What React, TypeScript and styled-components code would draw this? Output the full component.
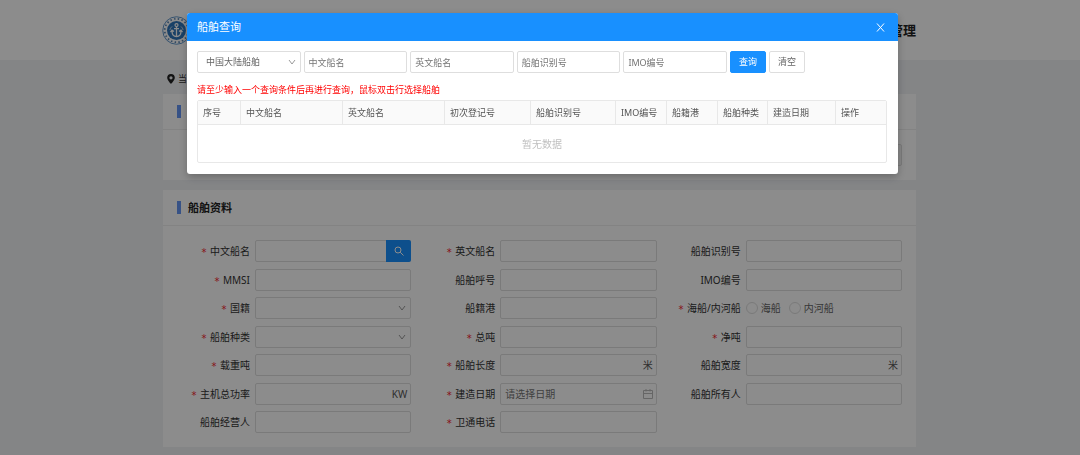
import React, { useId } from "react";
import styled, { createGlobalStyle, css } from "styled-components";

const blue = "#1890ff";
const line = "#dedede";

const GlobalStyle = createGlobalStyle`
  *, *::before, *::after { box-sizing: border-box; }
  body {
    margin: 0;
    background: #f0f2f5;
    color: #333;
    font: 10px/14px "Noto Sans", "Noto Sans CJK SC", sans-serif;
  }
  input, select, button { font: inherit; color: inherit; margin: 0; }
`;

const Page = styled.div`
  min-height: 100vh;
`;

const TopBar = styled.header`
  display: flex;
  align-items: center;
  justify-content: space-between;
  height: 60px;
  padding: 0 164px 0 162px;
  background: #fff;
`;

const SystemTitle = styled.h1`
  margin: 0;
  color: #222;
  font-size: 13px;
  line-height: 20px;
`;

const Content = styled.main`
  display: flex;
  flex-direction: column;
  gap: 10px;
  padding: 0 164px 8px 163px;
`;

const Crumbs = styled.nav`
  display: flex;
  align-items: center;
  gap: 3px;
  height: 24px;
  padding: 14px 0 0 4px;
  font-size: 9px;
`;

const Card = styled.section`
  background: #fff;
`;

const CardHeader = styled.div`
  display: flex;
  align-items: center;
  height: 36px;
  padding: 0 14px;
  border-bottom: 1px solid #eee;
`;

const CardTitle = styled.h2`
  display: flex;
  align-items: center;
  gap: 7px;
  margin: 0;
  color: #222;
  font-size: 11px;
  line-height: 16px;
  &::before {
    content: "";
    width: 4px;
    height: 13px;
    background: #6495f5;
  }
`;

const CardBody = styled.div`
  padding: 14px;
`;

const FormGrid = styled.form`
  display: grid;
  grid-template-columns: repeat(3, minmax(0, 1fr));
  column-gap: 11px;
  align-content: space-between;
  min-height: 193px;
`;

const Row = styled.div`
  display: flex;
  align-items: center;
  height: 22px;
`;

const Label = styled.label<{ $required?: boolean }>`
  flex: none;
  width: 78px;
  padding-right: 5px;
  text-align: right;
  white-space: nowrap;
  ${(p) =>
    p.$required &&
    css`
      &::before {
        content: "*";
        margin-right: 3px;
        color: #f5222d;
        font-family: "DejaVu Sans Mono", monospace;
        vertical-align: -1px;
        line-height: 10px;
      }
    `}
`;

const Control = styled.div`
  display: flex;
  flex: 1;
  align-items: center;
  min-width: 0;
  height: 22px;
  border: 1px solid ${line};
  border-radius: 2px;
  background: #fff;
`;

const TextInput = styled.input<{ $small?: boolean }>`
  flex: 1;
  width: 100%;
  min-width: 0;
  height: 20px;
  padding: 0 4px;
  border: 0;
  outline: 0;
  background: transparent;
  font-size: ${(p) => (p.$small ? 9 : 10)}px;
  &::placeholder { color: #757575; opacity: 1; }
`;

const SelectInput = styled.select<{ $small?: boolean }>`
  flex: 1;
  width: 100%;
  min-width: 0;
  height: 20px;
  padding: 0 8px;
  border: 0;
  outline: 0;
  appearance: none;
  background: transparent;
  color: #666;
  font-size: ${(p) => (p.$small ? 9 : 10)}px;
`;

const Suffix = styled.span`
  display: flex;
  padding-right: 3px;
  color: #555;
`;

const SearchButton = styled.button`
  display: flex;
  flex: none;
  align-items: center;
  justify-content: center;
  width: 25px;
  height: 22px;
  margin: -1px;
  padding: 0;
  border: 0;
  border-radius: 0 2px 2px 0;
  background: ${blue};
  color: #fff;
`;

const RadioGroup = styled.div`
  display: flex;
  gap: 8px;
`;

const RadioLabel = styled.label`
  display: flex;
  align-items: center;
  gap: 3px;
  color: #666;
`;

const Radio = styled.input`
  width: 12px;
  height: 12px;
  border: 1px solid ${line};
  border-radius: 50%;
  appearance: none;
  background: #fff;
  &:checked { border: 4px solid ${blue}; }
`;

const Mask = styled.div`
  position: fixed;
  inset: 0;
  padding: 13px 182px 0 187px;
  background: rgba(0, 0, 0, 0.45);
`;

const Dialog = styled.div`
  overflow: hidden;
  border-radius: 3px;
  background: #fff;
  box-shadow: 0 3px 9px rgba(0, 0, 0, 0.25);
`;

const DialogHeader = styled.div`
  display: flex;
  align-items: center;
  justify-content: space-between;
  height: 28px;
  padding: 0 13px 0 10px;
  background: ${blue};
  color: #fff;
`;

const DialogTitle = styled.h2`
  margin: 0;
  font-size: 11px;
  font-weight: 400;
  line-height: 16px;
`;

const CloseButton = styled.button`
  display: flex;
  padding: 0;
  border: 0;
  background: none;
`;

const DialogBody = styled.div`
  padding: 10px 11px 11px 10px;
`;

const SearchBar = styled.form`
  display: flex;
  gap: 3px;
`;

const SearchFields = styled.div`
  display: flex;
  flex: 0 1 530px;
  gap: 3px;
  min-width: 0;
`;

const Button = styled.button<{ $primary?: boolean }>`
  flex: none;
  width: 36px;
  height: 22px;
  padding: 0;
  border: 1px solid ${(p) => (p.$primary ? blue : line)};
  border-radius: 2px;
  background: ${(p) => (p.$primary ? blue : "#fff")};
  color: ${(p) => (p.$primary ? "#fff" : "#666")};
  font-size: 9px;
`;

const Hint = styled.p`
  margin: 10px 0 3px;
  color: #f00;
  font-size: 9px;
`;

const ResultTable = styled.table`
  width: 100%;
  border: 1px solid #e8e8e8;
  border-radius: 2px;
  border-spacing: 0;
  table-layout: fixed;
`;

const HeadCell = styled.th`
  height: 24px;
  padding: 0 5px;
  border-right: 1px solid #e8e8e8;
  border-bottom: 1px solid #e8e8e8;
  background: #fafafa;
  color: #555;
  font-size: 9px;
  font-weight: 400;
  text-align: left;
  white-space: nowrap;
  &:last-child { border-right: 0; }
`;

const EmptyCell = styled.td`
  height: 37px;
  padding: 0;
  color: #c0c0c0;
  text-align: center;
`;

const Chevron = () => (
  <Suffix>
    <svg width="10" height="10" viewBox="0 0 10 10" fill="none" stroke="#999" aria-hidden="true">
      <path d="M2 3l3 4 3-4" />
    </svg>
  </Suffix>
);

const CalendarIcon = () => (
  <Suffix>
    <svg width="10" height="10" viewBox="0 0 10 10" fill="none" stroke="#bbb" aria-hidden="true">
      <path d="M.5 1.5h9v8h-9zM.5 4.5h9M3 0v2.500M7 0v2.500" />
    </svg>
  </Suffix>
);

const Logo = () => (
  <svg width="29" height="29" viewBox="0 0 58 58" fill="none" stroke="#2f76bb" role="img" aria-label="徽标">
    <circle cx="29" cy="29" r="27.500" strokeWidth="1.500" />
    <circle cx="29" cy="29" r="23.500" strokeWidth="3.500" strokeDasharray="3 4.500" stroke="#5d87b3" />
    <circle cx="29" cy="29" r="19" fill="#2f76bb" stroke="none" />
    <g stroke="#fff" strokeWidth="2.500">
      <circle cx="29" cy="18" r="3" />
      <path d="M29 21v20M24 25h10M20 30c0 7 4 11 9 11s9-4 9-11M17 32l3-4 4 3M41 32l-3-4-4 3" />
      <path d="M20 21c-3 3-4 5-4 7M38 21c3 3 4 5 4 7" strokeWidth="1.500" />
    </g>
  </svg>
);

type FieldSpec = {
  label: string;
  required?: boolean;
  kind?: "search" | "select" | "radio" | "date";
  unit?: string;
  options?: string[];
};

const fields: FieldSpec[] = [
  { label: "中文船名", required: true, kind: "search" },
  { label: "英文船名", required: true },
  { label: "船舶识别号" },
  { label: "MMSI", required: true },
  { label: "船舶呼号" },
  { label: "IMO编号" },
  { label: "国籍", required: true, kind: "select" },
  { label: "船籍港" },
  { label: "海船/内河船", required: true, kind: "radio", options: ["海船", "内河船"] },
  { label: "船舶种类", required: true, kind: "select" },
  { label: "总吨", required: true },
  { label: "净吨", required: true },
  { label: "载重吨", required: true },
  { label: "船舶长度", required: true, unit: "米" },
  { label: "船舶宽度", unit: "米" },
  { label: "主机总功率", required: true, unit: "KW" },
  { label: "建造日期", required: true, kind: "date" },
  { label: "船舶所有人" },
  { label: "船舶经营人" },
  { label: "卫通电话", required: true },
];

function Field({ label, required, kind, unit, options = [] }: FieldSpec) {
  const id = useId();

  if (kind === "radio") {
    return (
      <Row role="radiogroup" aria-labelledby={id}>
        <Label as="span" id={id} $required={required}>{label}</Label>
        <RadioGroup>
          {options.map((option) => (
            <RadioLabel key={option}>
              <Radio type="radio" name={id} value={option} />
              {option}
            </RadioLabel>
          ))}
        </RadioGroup>
      </Row>
    );
  }

  return (
    <Row>
      <Label htmlFor={id} $required={required}>{label}</Label>
      <Control>
        {kind === "select" ? (
          <SelectInput id={id}><option value="" /></SelectInput>
        ) : (
          <TextInput id={id} placeholder={kind === "date" ? "请选择日期" : undefined} />
        )}
        {kind === "select" && <Chevron />}
        {kind === "date" && <CalendarIcon />}
        {unit && <Suffix>{unit}</Suffix>}
        {kind === "search" && (
          <SearchButton type="button" aria-label="查询船舶">
            <svg width="10" height="10" viewBox="0 0 10 10" fill="none" stroke="currentColor" aria-hidden="true">
              <circle cx="4" cy="4" r="3" />
              <path d="M6.200 6.200l3.300 3.300" />
            </svg>
          </SearchButton>
        )}
      </Control>
    </Row>
  );
}

const searchInputs = ["中文船名", "英文船名", "船舶识别号", "IMO编号"];

const columns: [string, number][] = [
  ["序号", 43],
  ["中文船名", 102],
  ["英文船名", 102],
  ["初次登记号", 86],
  ["船舶识别号", 85],
  ["IMO编号", 51],
  ["船籍港", 51],
  ["船舶种类", 50],
  ["建造日期", 68],
  ["操作", 50],
];

function ShipSearchDialog() {
  return (
    <Mask>
      <Dialog role="dialog" aria-modal="true" aria-labelledby="ship-search-title">
        <DialogHeader>
          <DialogTitle id="ship-search-title">船舶查询</DialogTitle>
          <CloseButton type="button" aria-label="关闭">
            <svg width="9" height="9" viewBox="0 0 9 9" stroke="currentColor" aria-hidden="true">
              <path d="M1 .5l7 8M8 .5l-7 8" />
            </svg>
          </CloseButton>
        </DialogHeader>
        <DialogBody>
          <SearchBar>
            <SearchFields>
              <Control>
                <SelectInput $small aria-label="船舶类型">
                  <option>中国大陆船舶</option>
                </SelectInput>
                <Chevron />
              </Control>
              {searchInputs.map((name) => (
                <Control key={name}>
                  <TextInput $small placeholder={name} aria-label={name} />
                </Control>
              ))}
            </SearchFields>
            <Button type="button" $primary>查询</Button>
            <Button type="reset">清空</Button>
          </SearchBar>
          <Hint>请至少输入一个查询条件后再进行查询，鼠标双击行选择船舶</Hint>
          <ResultTable>
            <colgroup>
              {columns.map(([name, width]) => <col key={name} width={width} />)}
            </colgroup>
            <thead>
              <tr>
                {columns.map(([name]) => <HeadCell key={name} scope="col">{name}</HeadCell>)}
              </tr>
            </thead>
            <tbody>
              <tr>
                <EmptyCell colSpan={columns.length}>暂无数据</EmptyCell>
              </tr>
            </tbody>
          </ResultTable>
        </DialogBody>
      </Dialog>
    </Mask>
  );
}

const ReadonlyInput = styled(TextInput)`
  border: 1px solid ${line};
  border-radius: 2px;
  height: 22px;
  background: #f5f5f5;
`;

export default function App() {
  return (
    <>
      <GlobalStyle />
      <Page>
        <TopBar>
          <Logo />
          <SystemTitle>管理</SystemTitle>
        </TopBar>
        <Content>
          <Crumbs>
            <svg width="8" height="10" viewBox="0 0 8 10" fill="#222" aria-hidden="true">
              <path fillRule="evenodd" d="M4 0a3.800 3.800 0 0 0-3.800 3.800C.2 6.300 4 10 4 10s3.800-3.700 3.800-6.200A3.800 3.800 0 0 0 4 0zm0 2.200a1.600 1.600 0 1 1 0 3.200 1.600 1.600 0 0 1 0-3.200z" />
            </svg>
            <span>当</span>
          </Crumbs>
          <Card>
            <CardHeader><CardTitle /></CardHeader>
            <CardBody>
              <Row>
                <Label>船舶</Label>
                <ReadonlyInput readOnly aria-label="船舶" />
              </Row>
            </CardBody>
          </Card>
          <Card>
            <CardHeader><CardTitle>船舶资料</CardTitle></CardHeader>
            <CardBody>
              <FormGrid>
                {fields.map((field) => <Field key={field.label} {...field} />)}
              </FormGrid>
            </CardBody>
          </Card>
        </Content>
      </Page>
      <ShipSearchDialog />
    </>
  );
}
